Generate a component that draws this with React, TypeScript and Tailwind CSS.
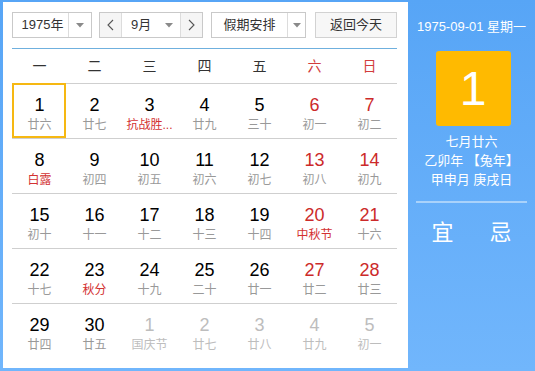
import React from "react";

type Cell = { d: number; l: string; numRed?: boolean; lunarRed?: boolean; other?: boolean; today?: boolean };

const rows: Cell[][] = [
  [
    { d: 1, l: "廿六", today: true },
    { d: 2, l: "廿七" },
    { d: 3, l: "抗战胜...", lunarRed: true },
    { d: 4, l: "廿九" },
    { d: 5, l: "三十" },
    { d: 6, l: "初一", numRed: true },
    { d: 7, l: "初二", numRed: true },
  ],
  [
    { d: 8, l: "白露", lunarRed: true },
    { d: 9, l: "初四" },
    { d: 10, l: "初五" },
    { d: 11, l: "初六" },
    { d: 12, l: "初七" },
    { d: 13, l: "初八", numRed: true },
    { d: 14, l: "初九", numRed: true },
  ],
  [
    { d: 15, l: "初十" },
    { d: 16, l: "十一" },
    { d: 17, l: "十二" },
    { d: 18, l: "十三" },
    { d: 19, l: "十四" },
    { d: 20, l: "中秋节", numRed: true, lunarRed: true },
    { d: 21, l: "十六", numRed: true },
  ],
  [
    { d: 22, l: "十七" },
    { d: 23, l: "秋分", lunarRed: true },
    { d: 24, l: "十九" },
    { d: 25, l: "二十" },
    { d: 26, l: "廿一" },
    { d: 27, l: "廿二", numRed: true },
    { d: 28, l: "廿三", numRed: true },
  ],
  [
    { d: 29, l: "廿四" },
    { d: 30, l: "廿五" },
    { d: 1, l: "国庆节", other: true },
    { d: 2, l: "廿七", other: true },
    { d: 3, l: "廿八", other: true },
    { d: 4, l: "廿九", other: true },
    { d: 5, l: "初一", other: true },
  ],
];

const weekdays = ["一", "二", "三", "四", "五", "六", "日"];

function Arrow() {
  return (
    <svg width="8" height="5" viewBox="0 0 8 5">
      <polygon points="0,0 8,0 4,4.5" fill="#8a8a8a" />
    </svg>
  );
}

function Chevron({ dir }: { dir: "l" | "r" }) {
  return (
    <svg width="7" height="12" viewBox="0 0 7 12">
      <polyline
        points={dir === "l" ? "6,1 1,6 6,11" : "1,1 6,6 1,11"}
        fill="none"
        stroke="#555"
        strokeWidth="1.1"
      />
    </svg>
  );
}

export default function App() {
  return (
    <div
      className="w-[535px] h-[371px] bg-gradient-to-b from-[#57a5f6] to-[#71b6fc] pt-[2px] pl-[3px] pb-[3px] flex text-[#333]"
      style={{ fontFamily: '"Liberation Sans", "Noto Sans CJK SC", sans-serif' }}
    >
      <div className="w-[405px] h-full bg-white pl-[9px] pr-[11px] pt-[10px] flex flex-col">
        {/* toolbar */}
        <div className="flex items-center h-[26px] text-[13px] text-[#333]">
          <div className="w-[80px] h-full border border-[#c9c9c9] flex">
            <div className="w-[55px] flex items-center justify-center pl-[4px]">1975年</div>
            <div className="flex-1 border-l border-[#dcdcdc] flex items-center justify-center">
              <Arrow />
            </div>
          </div>
          <div className="ml-[7px] w-[104px] h-full border border-[#c9c9c9] flex">
            <div className="w-[22px] bg-[#f5f5f5] border-r border-[#dcdcdc] flex items-center justify-center">
              <Chevron dir="l" />
            </div>
            <div className="flex-1 flex items-center pl-[9px] pr-[7px] justify-between">
              <span>9月</span>
              <Arrow />
            </div>
            <div className="w-[22px] bg-[#f5f5f5] border-l border-[#dcdcdc] flex items-center justify-center">
              <Chevron dir="r" />
            </div>
          </div>
          <div className="ml-[8px] w-[95px] h-full border border-[#c9c9c9] flex">
            <div className="w-[75px] flex items-center justify-center">假期安排</div>
            <div className="flex-1 border-l border-[#dcdcdc] flex items-center justify-center">
              <Arrow />
            </div>
          </div>
          <div className="ml-[9px] w-[82px] h-full border border-[#d2d2d2] bg-[#f7f7f7] flex items-center justify-center">
            返回今天
          </div>
        </div>
        <div className="mt-[10px] h-px bg-[#6fb0de]" />
        {/* header */}
        <div className="grid grid-cols-7 h-[34px] items-center text-[14px] text-[#333]">
          {weekdays.map((w, i) => (
            <div key={w} className={`text-center ${i >= 5 ? "text-[#d23c3c]" : ""}`}>
              {w}
            </div>
          ))}
        </div>
        {rows.map((row, ri) => (
          <div key={ri} className="grid grid-cols-7 h-[55px] border-t border-[#cfcfcf]">
            {row.map((c, ci) => {
              const numColor = c.other ? "text-[#bdbdbd]" : c.numRed ? "text-[#cc2a2a]" : "text-black";
              const lunarColor = c.other ? "text-[#bdbdbd]" : c.lunarRed ? "text-[#d33232]" : "text-[#999]";
              return (
                <div key={ci} className="relative flex flex-col items-center pt-[11px]">
                  {c.today && (
                    <div className="absolute top-[-1px] left-0 right-[1px] bottom-0 border-2 border-[#f6b812]" />
                  )}
                  <div className={`text-[18px] leading-[20px] ${numColor}`}>{c.d}</div>
                  <div className={`text-[12px] leading-[16px] mt-[2px] whitespace-nowrap ${lunarColor}`}>{c.l}</div>
                </div>
              );
            })}
          </div>
        ))}
      </div>
      {/* right panel */}
      <div className="flex-1 flex flex-col items-center text-white pt-[16px]">
        <div className="text-[13px] leading-[18px] whitespace-nowrap">1975-09-01 星期一</div>
        <div className="mt-[15px] w-[75px] h-[75px] bg-[#ffba00] rounded-[3px] flex items-center justify-center ml-[3px]">
          <span className="text-[48px] leading-none font-light">1</span>
        </div>
        <div className="mt-[6px] text-[13px] leading-[19px] text-center">
          <div>七月廿六</div>
          <div>乙卯年 【兔年】</div>
          <div>甲申月 庚戌日</div>
        </div>
        <div className="mt-[12px] w-[111px] h-[2px] bg-[#a9d2fb]" />
        <div className="mt-[16px] flex gap-[36px] text-[22px] leading-[28px]">
          <span>宜</span>
          <span>忌</span>
        </div>
      </div>
    </div>
  );
}
